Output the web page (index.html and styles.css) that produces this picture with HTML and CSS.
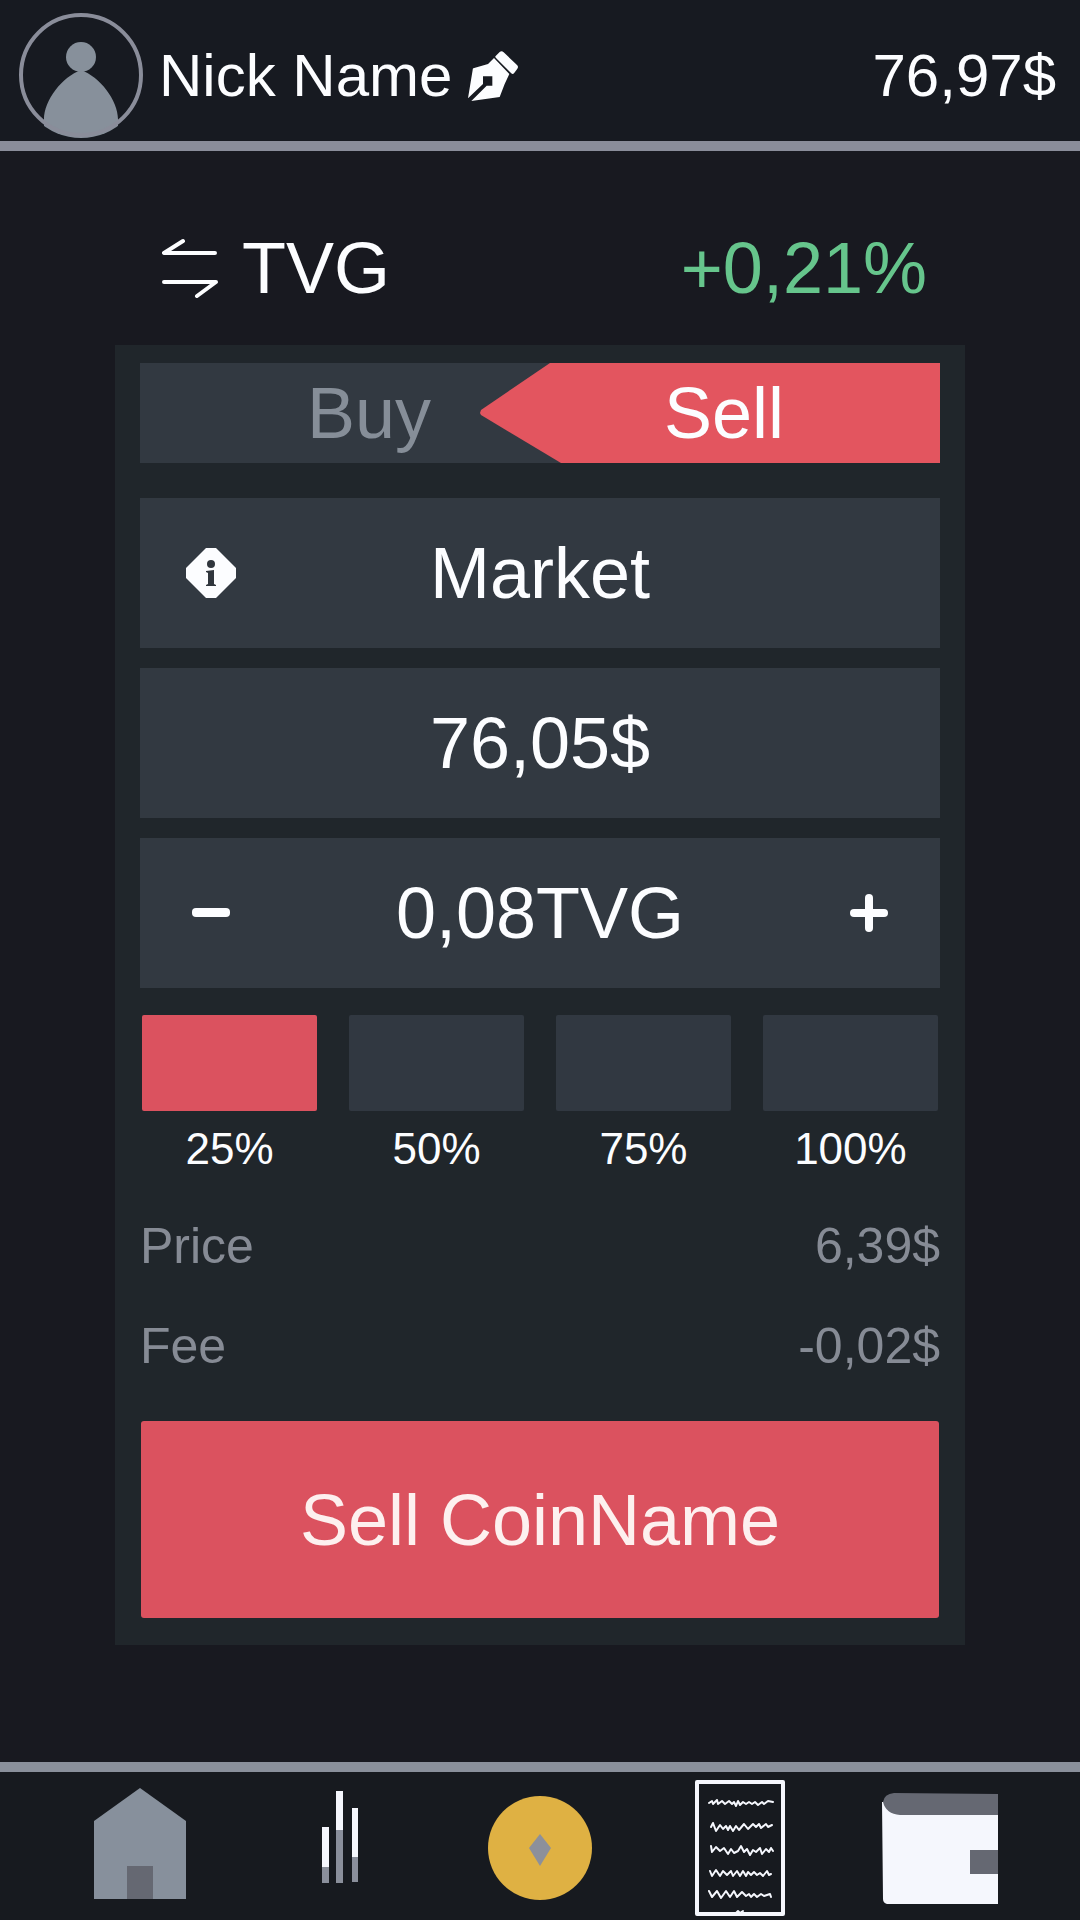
FILE: index.html
```html
<!DOCTYPE html>
<html lang="en">
<head>
  <meta charset="utf-8">
  <meta name="viewport" content="width=device-width, initial-scale=1">
  <title>Sell TVG</title>
  <link rel="stylesheet" href="styles.css">
</head>
<body>
  <header class="topbar">
    <svg class="avatar" viewBox="0 0 126 126" role="img" aria-label="Profile picture">
      <clipPath id="avatar-clip"><circle cx="63" cy="62" r="63"/></clipPath>
      <path d="M63 57C82 64 101 88 100 108V126H26V108C25 88 44 64 63 57Z" clip-path="url(#avatar-clip)"/>
      <circle cx="63" cy="44" r="15"/>
      <circle class="avatar-ring" cx="63" cy="62" r="60"/>
    </svg>
    <span class="nickname">Nick Name</span>
    <button class="icon-button edit" type="button" aria-label="Edit name">
      <svg width="50" height="50" viewBox="24 21 150 150"><path fill="#fcfdff" d="M40 73 84 60 102 42 148 90 134 120 119 159 34 171 80 125H97V97H69V120L24 163 38 78Q38 74 40 73ZM107 36 119 24Q125 19 131 25L171 63Q177 69 171 76L162 88Q158 92 153 87L108 42Q104 39 107 36Z"/></svg>
    </button>
    <span class="balance">76,97$</span>
  </header>

  <main class="trade">
    <div class="pair">
      <button class="icon-button" type="button" aria-label="Switch pair">
        <svg width="56" height="60" viewBox="0 0 56 60" fill="none" stroke="currentColor" stroke-width="4" stroke-linecap="round" stroke-linejoin="round"><path d="M21 3 2 15H53M2 44H54L35 58"/></svg>
      </button>
      <h1 class="pair-name">TVG</h1>
      <span class="change">+0,21%</span>
    </div>

    <form class="card">
      <div class="tabs">
        <button class="tab tab-buy" type="button">Buy</button>
        <button class="tab tab-sell" type="button" aria-pressed="true">Sell</button>
      </div>

      <div class="field">
        <button class="icon-button" type="button" aria-label="Order type info">
          <svg width="50" height="50" viewBox="0 0 50 50"><path fill="#fcfdff" d="M20 0H30L50 20V30L30 50H20L0 30V20Z"/><g fill="#30363d"><circle cx="25" cy="16" r="4"/><path d="M20 23 28 22V36L30 37V38H20V37L22 36V25L20 24Z"/></g></svg>
        </button>
        <select class="value" aria-label="Order type"><option>Market</option></select>
      </div>
      <div class="field">
        <input class="value" type="text" value="76,05$" aria-label="Price per coin">
      </div>
      <div class="field">
        <button class="icon-button" type="button" aria-label="Decrease amount">
          <svg width="38" height="38" viewBox="0 0 38 38"><rect fill="currentColor" y="14" width="38" height="9" rx="4"/></svg>
        </button>
        <input class="value" type="text" value="0,08TVG" aria-label="Amount">
        <button class="icon-button" type="button" aria-label="Increase amount">
          <svg width="38" height="38" viewBox="0 0 38 38" fill="currentColor"><rect y="15" width="38" height="8" rx="4"/><rect x="15" width="8" height="38" rx="4"/></svg>
        </button>
      </div>

      <div class="shares">
        <label class="share"><input type="radio" name="share" checked>25%</label>
        <label class="share"><input type="radio" name="share">50%</label>
        <label class="share"><input type="radio" name="share">75%</label>
        <label class="share"><input type="radio" name="share">100%</label>
      </div>

      <dl class="summary">
        <div class="summary-row"><dt>Price</dt><dd>6,39$</dd></div>
        <div class="summary-row"><dt>Fee</dt><dd>-0,02$</dd></div>
      </dl>

      <button class="submit" type="button">Sell CoinName</button>
    </form>
  </main>

  <nav class="bottombar">
    <a href="#home" aria-label="Home">
      <svg viewBox="0 0 120 148"><path fill="#87909c" d="M60 16 106 49V127H14V49Z"/><path fill="#656872" d="M47 94H73V127H47Z"/></svg>
    </a>
    <a href="#markets" aria-label="Markets">
      <svg viewBox="0 0 120 148"><path fill="#f5f7fd" d="M42 55h7v40h-7zM56 19h7v39h-7zM72 36h6v49h-6z"/><path fill="#8a8f9b" d="M42 95h7v16h-7zM56 58h7v53h-7zM72 85h6v25h-6z"/></svg>
    </a>
    <a href="#trade" aria-label="Trade" aria-current="page">
      <svg viewBox="0 0 120 148"><circle fill="#dfb143" cx="60" cy="76" r="52"/><path fill="#8c909b" d="M60 62 71 76 60 94 49 76Z"/></svg>
    </a>
    <a href="#history" aria-label="History">
      <svg viewBox="0 0 120 148" fill="none" stroke="#f5f7fd" stroke-linejoin="round" stroke-linecap="round">
        <path stroke-width="4" d="M17 10H103L103 142H17Z"/>
        <path stroke-width="2" d="M29 31 32 29 33 32 37 28 38 32 42 29 45 32 49 29 52 32 54 30 56 34 58 29 60 33 63 30 66 32 69 30 72 32 75 30 78 33 82 30 84 32 88 29 93 30M31 55 33 51 36 59 40 53 43 57 46 54 48 58 50 54 53 59 56 54 59 58 64 52 68 57 73 52 76 55 79 52 81 56 86 52 88 55 92 53M31 74 32 80 36 75 40 79 44 76 48 82 51 77 54 81 58 79 61 74 64 80 67 77 70 83 73 78 76 80 80 76 82 82 86 77 89 80 91 76 93 79M30 99 32 104 36 98 40 104 43 99 47 103 51 99 53 104 57 99 60 104 63 99 66 104 68 100 71 103 74 100 77 103 80 101 83 104 87 99 89 103 91 102M29 119 32 125 37 119 41 126 46 119 50 125 54 119 57 125 62 120 66 124 69 122 71 125 74 122 77 125 81 122 84 124 90 122 91 125M56 141 58 139 60 141 63 139"/>
      </svg>
    </a>
    <a href="#wallet" aria-label="Wallet">
      <svg viewBox="0 0 120 148"><path fill="#f5f7fd" d="M2 30H118V132H7Q3 131 3 127Z"/><path fill="#656872" d="M14 21 118 22V43H20Q6 42 3 30 4 22 14 21ZM90 78H118V102H90Z"/></svg>
    </a>
  </nav>
</body>
</html>
```
FILE: styles.css
```css
* {
  box-sizing: border-box;
}

body {
  display: flex;
  flex-direction: column;
  min-height: 100vh;
  margin: 0;
  background: #181920;
  color: #fcfdff;
  font-family: "Liberation Sans", Arial, sans-serif;
}

button,
input,
select {
  margin: 0;
  padding: 0;
  border: 0;
  border-radius: 0;
  background: none;
  color: inherit;
  font: inherit;
}

svg {
  display: block;
}

.topbar {
  display: flex;
  align-items: center;
  height: 151px;
  padding: 10px 24px 0 18px;
  border-bottom: 10px solid #8a8d9a;
  background: #171a21;
  font-size: 60px;
}

.avatar {
  width: 126px;
  height: 126px;
  margin-right: 15px;
  fill: #87909b;
}

.avatar-ring {
  fill: none;
  stroke: #8a8d9a;
  stroke-width: 4;
}

.icon-button {
  display: flex;
  align-items: center;
  justify-content: center;
}

.edit {
  margin-left: 16px;
}

.balance {
  margin-left: auto;
}

.trade {
  flex: 1;
  width: 100%;
  max-width: 898px;
  margin: 0 auto;
  padding: 38px 24px 116px;
  font-size: 72px;
}

.pair {
  display: flex;
  align-items: center;
  height: 156px;
  padding: 2px 38px 0 47px;
}

.pair-name {
  margin: 0 0 0 24px;
  font-size: 72px;
  font-weight: 400;
}

.change {
  margin-left: auto;
  color: #66c58c;
}

.card {
  display: flex;
  flex-direction: column;
  gap: 20px;
  padding: 18px 25px 27px;
  background: #20262b;
}

.tabs {
  display: grid;
  grid-template-columns: 17fr 23fr;
  height: 100px;
  margin-bottom: 15px;
  background: #323941;
}

.tab-buy {
  padding-left: 118px;
  color: #868e98;
}

.tab-sell {
  padding-left: 28px;
  background: #e3555f;
  clip-path: polygon(0 50%, 1px 47%, 70px 0, 100% 0, 100% 100%, 81px 100%, 1px 52%);
}

.field {
  display: grid;
  grid-template-columns: 142px 1fr 142px;
  height: 150px;
  background: #323941;
}

.value {
  grid-column: 2;
  width: 100%;
  text-align: center;
  text-align-last: center;
  appearance: none;
}

.shares {
  display: flex;
  justify-content: space-between;
  padding: 7px 2px 0;
  font-size: 44px;
  line-height: 52px;
}

.share {
  display: flex;
  flex-direction: column;
  align-items: center;
  gap: 12px;
  width: 22%;
}

.share input {
  width: 100%;
  height: 96px;
  border-radius: 2px;
  background: #313841;
  appearance: none;
}

.share input:checked {
  background: #db525f;
}

.summary {
  margin: 1px 0 0;
  color: #868b95;
  font-size: 50px;
  line-height: 100px;
}

.summary-row {
  display: flex;
  justify-content: space-between;
}

.summary-row dd {
  margin: 0;
}

.submit {
  height: 197px;
  margin: 5px 1px 0;
  border-radius: 3px;
  background: #db525f;
  color: #fdf0ef;
}

.bottombar {
  display: grid;
  grid-template-columns: repeat(5, 1fr);
  padding: 0 40px;
  border-top: 10px solid #8a909b;
  background: #171a1f;
}

.bottombar a {
  display: flex;
  justify-content: center;
}

.bottombar svg {
  width: 120px;
  height: 148px;
}
```
